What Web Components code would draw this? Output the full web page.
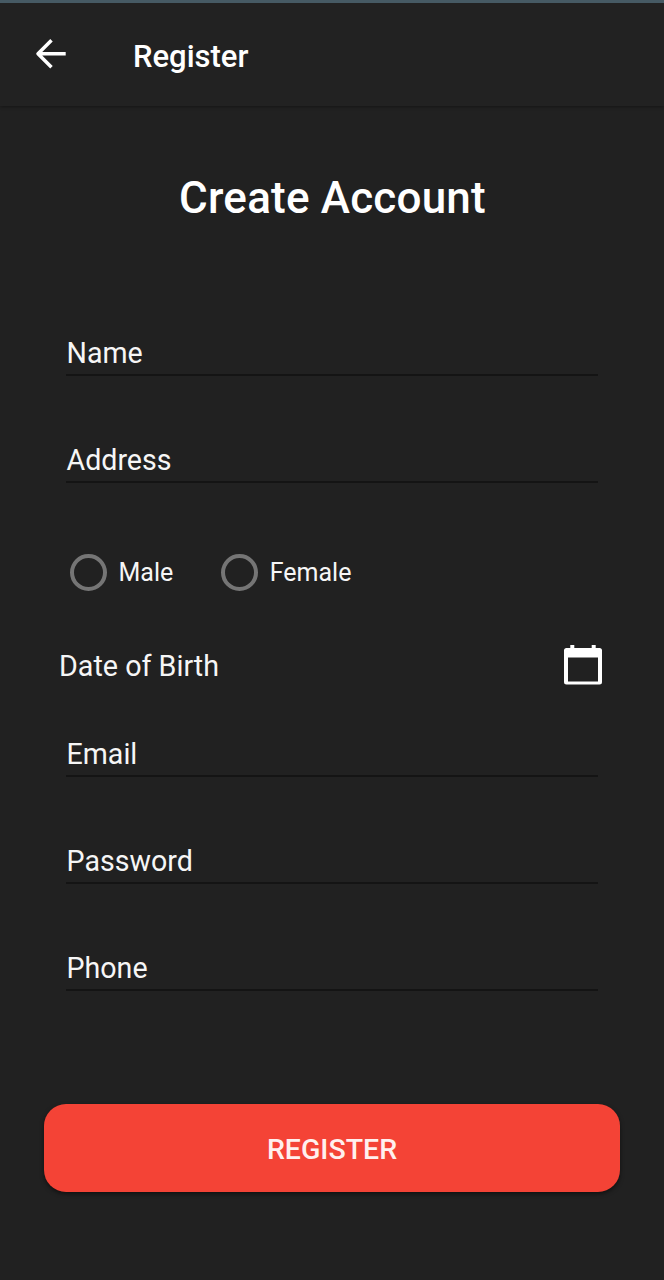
<!DOCTYPE html>
<html lang="en">
<head>
<meta charset="utf-8">
<title>Register</title>
<style>
body{margin:0;background:#212121;color:#fff;font-family:Roboto,"Noto Sans",sans-serif}
</style>
</head>
<body>
<register-screen></register-screen>
<script>
const define=(name,html)=>customElements.define(name,class extends HTMLElement{
  constructor(){super();this.attachShadow({mode:'open'}).innerHTML=html;}
});

define('app-bar',`<style>
:host{display:flex;align-items:center;box-sizing:border-box;height:106px;border-top:3px solid #465a64;padding:5px 0 0 30px;background:#222;box-shadow:0 1px 3px rgba(0,0,0,.35)}
svg{display:block;width:42px;height:42px;margin-top:-6px}
h1{margin:0 0 0 61px;font-size:31px;line-height:40px;font-weight:500}
</style>
<svg viewBox="0 0 42 42" fill="none" stroke="#fff" stroke-width="3.5" stroke-linejoin="round"><path d="M35.700 20.800H8M21.500 7.300L8 20.800l13.500 13.500"/></svg>
<h1><slot></slot></h1>`);

define('text-field',`<style>
:host{display:block;box-sizing:border-box;height:41px;margin:0 66px;border-bottom:2px solid #141414;padding-left:.5px;font-size:28.6px;line-height:36px;color:#f6f6f6}
</style><slot></slot>`);

define('radio-option',`<style>
:host{display:flex;align-items:center;gap:11.500px;height:38px;font-size:25px;line-height:38px;color:#f6f6f6}
i{box-sizing:border-box;width:37px;height:37px;border:4px solid #757575;border-radius:50%}
span{padding-top:2px}
</style><i></i><span><slot></slot></span>`);

define('date-field',`<style>
:host{display:flex;justify-content:space-between;align-items:center;height:42px;margin:0 62px 0 59px;font-size:28.7px;color:#f6f6f6}
svg{display:block;width:38px;height:40px;margin-top:-2px}
</style><span><slot></slot></span>
<svg viewBox="0 0 38 40" fill="#fff"><path fill-rule="evenodd" d="M6.300 0h4v3h17.400V0h4v3H35.500a2.500 2.500 0 0 1 2.500 2.500V37a2.500 2.500 0 0 1-2.500 2.500H2.500A2.500 2.500 0 0 1 0 37V5.500A2.500 2.500 0 0 1 2.500 3h3.800zM4 12.500v24h30v-24z"/></svg>`);

define('primary-button',`<style>
:host{display:block;margin:0 44px}
button{display:block;width:100%;height:88px;border:0;border-radius:22px;padding:3px 0 0;background:#f44336;color:#fff0ee;font:500 28.5px/40px Roboto,sans-serif;box-shadow:0 2px 4px rgba(0,0,0,.5)}
</style><button><slot></slot></button>`);

define('register-screen',`<style>
:host{display:block;height:1280px;overflow:hidden}
h2{margin:62px 0 0;padding-left:1px;text-align:center;font-size:44px;line-height:60px;font-weight:500;letter-spacing:.2px}
.group{display:grid;gap:66px}
.first{margin-top:107px}
.radios{display:flex;gap:48px;margin:70px 0 0 70px}
date-field{margin-top:54px}
.second{margin-top:49px}
primary-button{margin-top:113px}
</style>
<app-bar>Register</app-bar>
<h2>Create Account</h2>
<div class="group first"><text-field>Name</text-field><text-field>Address</text-field></div>
<div class="radios"><radio-option>Male</radio-option><radio-option>Female</radio-option></div>
<date-field>Date of Birth</date-field>
<div class="group second"><text-field>Email</text-field><text-field>Password</text-field><text-field>Phone</text-field></div>
<primary-button>REGISTER</primary-button>`);
</script>
</body>
</html>
